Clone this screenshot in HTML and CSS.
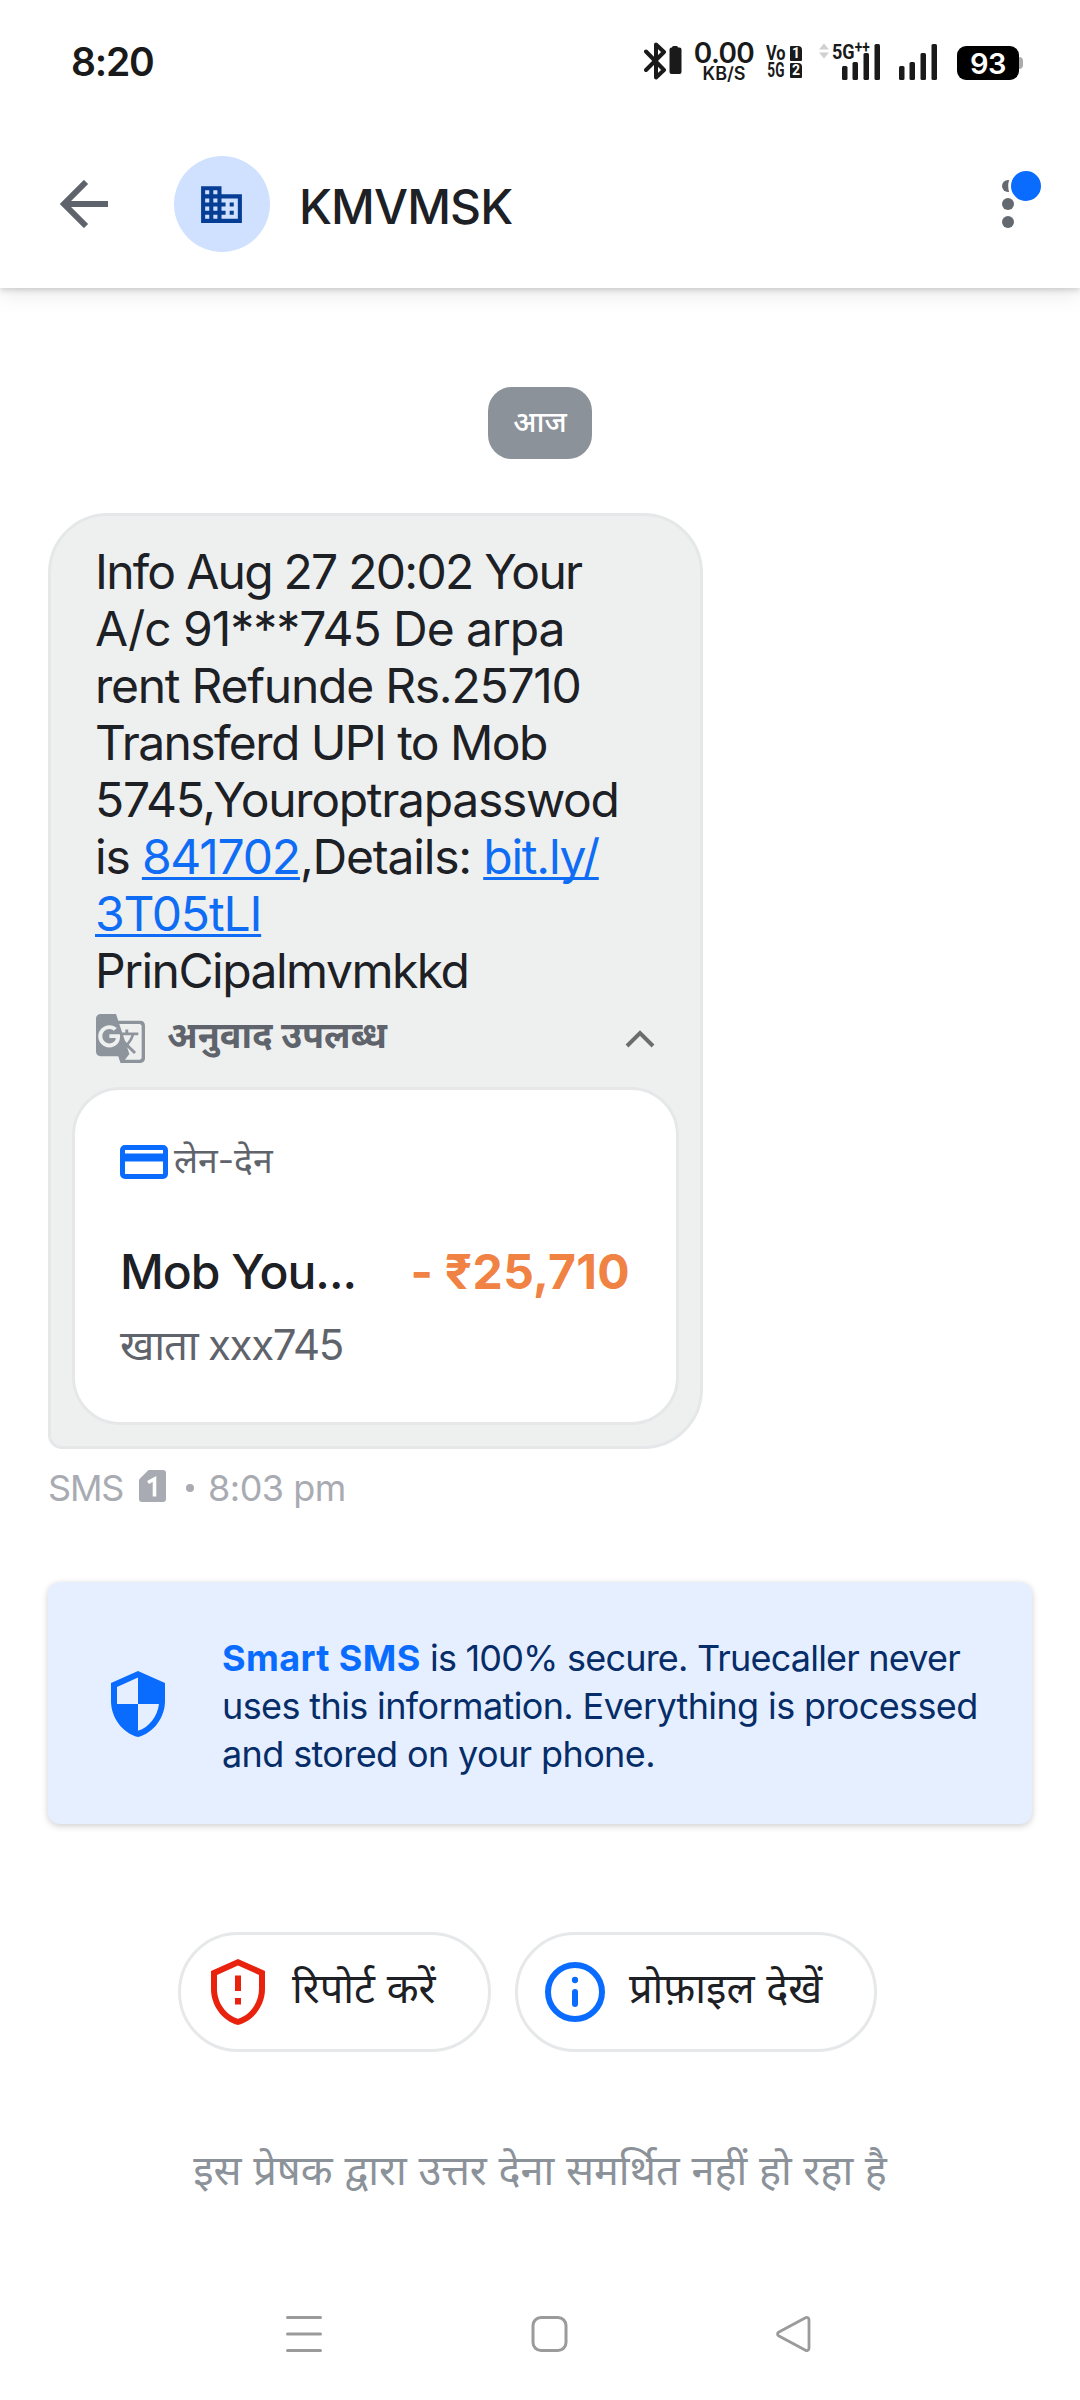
FILE: index.html
```html
<!DOCTYPE html>
<html lang="hi">
<head>
<meta charset="utf-8">
<title>KMVMSK</title>
<link rel="stylesheet" href="styles.css">
</head>
<body>
<div class="screen">
  <div class="status">
    <span class="clock">8:20</span>
    <svg class="status-bt" viewBox="0 0 38 40"><path d="M2 10.500 20 29 12 36.500V3.500L20 11 2 29" fill="none" stroke="#1a1a1a" stroke-width="4" stroke-linejoin="round" stroke-linecap="round"/><path d="M28 6.500a1.500 1.500 0 0 1 1.500-1.500h3a1.500 1.500 0 0 1 1.500 1.500h1.500a2 2 0 0 1 2 2V31a2 2 0 0 1-2 2h-8a2 2 0 0 1-2-2V8.500a2 2 0 0 1 2-2z" fill="#1a1a1a"/></svg>
    <span class="speed"><b>0.00</b><i>KB/S</i></span>
    <span class="volte"><span class="volte-row"><b>Vo</b><em>1</em></span><span class="volte-row"><b class="narrow">5G</b><em>2</em></span></span>
    <span class="sig">
      <svg viewBox="0 0 64 40"><path d="M0 8.500 5 2.500l5 6zM0 11.500h10l-5 6z" fill="#d0d0d0"/><g fill="#1a1a1a"><rect x="23" y="25" width="5.500" height="14" rx="1.500"/><rect x="33.500" y="21" width="5.500" height="18" rx="1.500"/><rect x="44.500" y="12" width="5.500" height="27" rx="1.500"/><rect x="55.500" y="3" width="5.500" height="36" rx="1.500"/></g></svg>
      <b class="net">5G<small>++</small></b>
    </span>
    <svg class="sig2" viewBox="0 0 38 40"><g fill="#1a1a1a"><rect y="25" width="5.500" height="14" rx="1.500"/><rect x="10.500" y="21" width="5.500" height="18" rx="1.500"/><rect x="21.500" y="12" width="5.500" height="27" rx="1.500"/><rect x="32.500" y="3" width="5.500" height="36" rx="1.500"/></g></svg>
    <span class="battery">93</span><span class="nub"></span>
  </div>

  <header class="header">
    <svg class="back" viewBox="0 0 48 48"><path d="M26 2 4 24l22 22M4 24h44" fill="none" stroke="#5f636b" stroke-width="6"/></svg>
    <span class="avatar"><svg viewBox="0 0 24 24" width="49" height="49"><path fill="#063e96" d="M12 7V3H2v18h20V7H12zM6 19H4v-2h2v2zm0-4H4v-2h2v2zm0-4H4V9h2v2zm0-4H4V5h2v2zm4 12H8v-2h2v2zm0-4H8v-2h2v2zm0-4H8V9h2v2zm0-4H8V5h2v2zm10 12h-8v-2h2v-2h-2v-2h2v-2h-2V9h8v10zm-2-8h-2v2h2v-2zm0 4h-2v2h2v-2z"/></svg></span>
    <h1 class="name">KMVMSK</h1>
    <svg class="more" viewBox="0 0 42 60"><g fill="#646870"><circle cx="8" cy="18" r="6"/><circle cx="8" cy="36" r="6"/><circle cx="8" cy="54" r="6"/></g><circle cx="26" cy="18" r="16.400" fill="#0a6cff" stroke="#fff" stroke-width="2.800"/></svg>
  </header>

  <main class="thread">
    <div class="day">आज</div>
    <section class="bubble">
      <p class="message">
        <span>Info Aug 27 20:02 Your</span>
        <span>A/c 91***745 De arpa</span>
        <span>rent Refunde Rs.25710</span>
        <span>Transferd UPI to Mob</span>
        <span>5745,Youroptrapasswod</span>
        <span>is <a>841702</a>,Details: <a>bit.ly/</a></span>
        <span><a>3T05tLI</a></span>
        <span>PrinCipalmvmkkd</span>
      </p>
      <div class="translate">
        <svg class="gt" viewBox="1 1 22 22"><path fill="#8e949c" d="M21 4H11l-1-3H3c-1.100 0-2 .9-2 2v15c0 1.100.9 2 2 2h8l1 3h9c1.100 0 2-.9 2-2V6c0-1.100-.9-2-2-2zM7 16c-2.760 0-5-2.240-5-5s2.240-5 5-5c1.350 0 2.480.5 3.350 1.300L9.030 8.570c-.38-.36-1.040-.78-2.030-.78-1.740 0-3.150 1.440-3.150 3.210S5.260 14.210 7 14.210c2.010 0 2.840-1.440 2.920-2.410H7v-1.710h4.680c.07.31.12.61.12 1.020C11.800 13.970 9.890 16 7 16zm6.170-5.420h3.700c-.43 1.250-1.110 2.430-2.050 3.470-.31-.35-.6-.72-.86-1.100l-.79-2.370zm8.330 9.920c0 .55-.45 1-1 1H14l2-2.500-1.040-3.100 3.100 3.100.92-.92-3.300-3.250.02-.02c1.130-1.250 1.930-2.690 2.400-4.220H20v-1.300h-4.530V8h-1.290v1.290h-1.440L11.460 5.500h9.040c.55 0 1 .45 1 1v14z"/></svg>
        <span class="translate-text">अनुवाद उपलब्ध</span>
        <svg class="chev" viewBox="0 0 30 18"><path d="M2 16 15 3l13 13" fill="none" stroke="#6d6d6d" stroke-width="4"/></svg>
      </div>
      <div class="card">
        <div class="kind"><svg class="cc" viewBox="0 0 48 34"><rect x="2.500" y="2.500" width="43" height="29" rx="2.500" fill="#fff" stroke="#0a6cff" stroke-width="5"/><path fill="#0a6cff" d="M3 8.500h42v8H3z"/></svg><span class="kind-text">लेन-देन</span></div>
        <div class="payment"><span class="payee">Mob You...</span><span class="amount">- ₹25,710</span></div>
        <div class="account">खाता xxx745</div>
      </div>
    </section>
    <div class="meta"><span class="channel">SMS</span><svg class="sim" viewBox="0 0 27 32"><path fill="#a9abb2" d="M9.500 0H24a3 3 0 0 1 3 3v26a3 3 0 0 1-3 3H3a3 3 0 0 1-3-3V9.500z"/><path fill="none" stroke="#fff" stroke-width="3.600" d="M9 12.500 15.500 9v17.500"/></svg><i class="dot"></i><span class="time">8:03 pm</span></div>

    <section class="banner">
      <svg class="shield" viewBox="0 0 24 24"><path fill="#0a6cff" d="M12 1L3 5v6c0 5.550 3.840 10.740 9 12 5.160-1.260 9-6.450 9-12V5l-9-4zm0 10.990h7c-.53 4.120-3.280 7.790-7 8.940V12H5V6.300l7-3.110v8.800z"/></svg>
      <p class="banner-text">
        <span><b>Smart SMS</b> is 100% secure. Truecaller never</span>
        <span>uses this information. Everything is processed</span>
        <span>and stored on your phone.</span>
      </p>
    </section>

    <div class="actions">
      <button class="action"><svg class="ico" viewBox="0 0 24 24"><path fill="#e8220c" d="M12 1L3 5v6c0 5.550 3.840 10.740 9 12 5.160-1.260 9-6.450 9-12V5l-9-4zm7 10c0 4.520-2.980 8.690-7 9.930-4.020-1.240-7-5.410-7-9.930V6.300l7-3.110 7 3.110V11zM11 6.500h2v5.200h-2zM11 14h2v2.200h-2z"/></svg><span>रिपोर्ट करें</span></button>
      <button class="action"><svg class="ico" viewBox="0 0 24 24"><g fill="none" stroke="#0a6cff" stroke-width="2"><circle cx="12" cy="12" r="9"/><path d="M12 12v4" stroke-linecap="round"/></g><circle cx="12" cy="8" r="1.050" fill="#0a6cff"/></svg><span>प्रोफ़ाइल देखें</span></button>
    </div>
    <p class="note">इस प्रेषक द्वारा उत्तर देना समर्थित नहीं हो रहा है</p>
  </main>

  <nav class="nav">
    <svg viewBox="0 0 38 38"><path d="M2.500 2.500h33M2.500 19h33M2.500 35.500h33" fill="none" stroke="#9b9b9b" stroke-width="3" stroke-linecap="round"/></svg>
    <svg viewBox="0 0 38 38"><rect x="3" y="2.500" width="33" height="33" rx="8" fill="none" stroke="#9b9b9b" stroke-width="3"/></svg>
    <svg viewBox="0 0 38 38"><path d="M3.500 17.300 30.500 2.700a2.300 2.300 0 0 1 3.500 2v28.600a2.300 2.300 0 0 1-3.500 2L3.500 20.700a2 2 0 0 1 0-3.400z" fill="none" stroke="#9b9b9b" stroke-width="2.800"/></svg>
  </nav>
</div>
</body>
</html>
```
FILE: styles.css
```css
* { box-sizing: border-box; }
body { margin: 0; background: #fff; }
.screen {
  width: 1080px; height: 2400px; display: flex; flex-direction: column;
  font-family: Inter, "Noto Sans", "Noto Sans Devanagari", sans-serif;
  color: #1d2024; white-space: nowrap; overflow: hidden;
}
svg { display: block; flex: none; }

/* Status bar */
.status { height: 120px; flex: none; display: flex; align-items: flex-start; padding: 41px 56px 0 71px; color: #1a1a1a; }
.clock { width: 572px; font-size: 39px; font-weight: 600; line-height: 41px; letter-spacing: -1.2px; }
.status-bt { width: 38px; height: 40px; margin-left: 1px; }
.speed { width: 64px; margin-left: 10px; display: flex; flex-direction: column; align-items: center; }
.speed b { font-size: 28px; line-height: 24px; font-weight: 600; letter-spacing: -.6px; }
.speed i { font-size: 18px; line-height: 18px; font-weight: 600; font-style: normal; }
.volte { width: 36px; margin-left: 10px; padding-top: 5px; display: flex; flex-direction: column; gap: 2px; }
.volte-row { display: flex; justify-content: space-between; align-items: center; height: 15px; }
.volte b { width: 20px; font: 700 20px/15px Roboto, sans-serif; transform: scaleX(.82); transform-origin: left; }
.volte .narrow { transform: scaleX(.68) translateX(2px); }
.volte em { width: 12px; height: 15px; background: #1a1a1a; border-radius: 1px 4px 1px 1px; color: #fff; font: 700 14px/15px Roboto, sans-serif; text-align: center; }
.sig { position: relative; margin-left: 17px; width: 64px; }
.sig svg { width: 64px; height: 40px; }
.net { position: absolute; left: 13px; top: 2px; font: 700 21px/18px Roboto, sans-serif; transform: scaleX(.86); transform-origin: left; }
.net small { font-size: 16px; vertical-align: 6px; line-height: 1px; }
.sig2 { width: 38px; height: 40px; margin-left: 16px; }
.battery { margin: 5px 0 0 20px; width: 62px; height: 34px; border-radius: 9px; background: #000; color: #fff; font-size: 29px; font-weight: 600; line-height: 35px; text-align: center; letter-spacing: -.4px; }
.nub { width: 4px; height: 12px; margin-top: 16px; background: #aaa; border-radius: 0 4px 4px 0; }

/* Conversation header */
.header { height: 168px; flex: none; display: flex; align-items: center; padding: 0 38px 0 60px; box-shadow: 0 2px 6px rgba(0,0,0,.16), 0 6px 22px rgba(0,0,0,.09); clip-path: inset(0 0 -50px 0); }
.back { width: 48px; height: 48px; }
.avatar { width: 96px; height: 96px; margin-left: 66px; border-radius: 50%; background: #cfe1ff; display: flex; align-items: center; justify-content: center; }
.avatar svg { margin-right: 1px; }
.name { margin: 5px 0 0 29px; flex: 1; font-size: 48px; font-weight: 500; line-height: 60px; letter-spacing: -.9px; }
.more { width: 42px; height: 60px; margin-bottom: 12px; }

/* Message bubble */
.thread { flex: 1; display: flex; flex-direction: column; padding: 99px 48px 0; }
.day { align-self: center; width: 104px; height: 72px; border-radius: 24px; background: #8c9299; color: #fff; font-size: 29.5px; font-weight: 500; line-height: 69px; text-align: center; }
.bubble { width: 655px; height: 936px; margin-top: 54px; padding: 27px 21px 0; border: 3px solid #e5e7e8; border-radius: 60px 60px 60px 14px; background: #eef0f0; }
.message { height: 456px; margin: 0 25px 0 23px; font-size: 48px; font-weight: 380; line-height: 57px; letter-spacing: -1.3px; }
.message span { display: block; }
.message span:nth-child(1) { letter-spacing: -1.75px; }
.message span:nth-child(2) { letter-spacing: -1.05px; }
.message span:nth-child(3) { letter-spacing: -1.25px; }
.message span:nth-child(4) { letter-spacing: -1.58px; }
.message span:nth-child(6) { letter-spacing: -1.2px; }
.message span:nth-child(7) { letter-spacing: -1.15px; }
.message span:nth-child(8) { letter-spacing: -1.5px; }
.message a { color: #0f6cf5; text-decoration: underline; text-decoration-thickness: 3px; text-underline-offset: 3px; text-decoration-skip-ink: none; }
.translate { height: 49px; margin: 15px 24px 0; display: flex; align-items: center; }
.gt { width: 49px; height: 49px; }
.translate-text { flex: 1; height: 49px; margin-left: 22px; color: #5f636b; font-size: 36px; font-weight: 700; line-height: 43px; }
.chev { width: 30px; height: 18px; }
.card { width: 607px; height: 338px; margin-top: 24px; padding: 45px 45px 0; border: 3px solid #e5e7e8; border-radius: 48px; background: #fff; }
.kind { height: 54px; display: flex; align-items: center; gap: 6px; color: #5f636b; font-size: 35.5px; }
.kind-text { height: 54px; line-height: 52px; }
.cc { width: 48px; height: 34px; }
.payment { height: 60px; margin-top: 52px; display: flex; justify-content: space-between; font-size: 48px; line-height: 61px; }
.payee { font-weight: 500; letter-spacing: -1px; }
.amount { margin-right: 1px; color: #f08244; font-weight: 700; letter-spacing: .3px; }
.account { height: 60px; margin-top: 16px; color: #5f636b; font-size: 42px; line-height: 56px; letter-spacing: -1.3px; }
.meta { height: 44px; margin-top: 17px; display: flex; align-items: center; color: #a9abb2; font-size: 36px; line-height: 44px; }
.channel { width: 75px; letter-spacing: -1.2px; }
.sim { width: 27px; height: 32px; margin: 0 0 4px 16px; }
.dot { width: 8px; height: 8px; margin: 0 14px 0 20px; border-radius: 50%; background: #a9abb2; }
.time { letter-spacing: -.5px; }

/* Security banner */
.banner { height: 242px; margin-top: 72px; padding-left: 54px; display: flex; align-items: center; border-radius: 12px; background: #e5efff; box-shadow: 0 2px 7px rgba(0,0,0,.2); }
.shield { width: 72px; height: 72px; margin-top: 2px; }
.banner-text { margin: 5px 0 0 48px; color: #062d68; font-size: 36px; font-weight: 380; line-height: 48px; }
.banner-text span { display: block; letter-spacing: -.62px; }
.banner-text span:first-child { letter-spacing: -.8px; }
.banner-text b { color: #0a6cff; letter-spacing: .4px; }

/* Sender actions */
.actions { height: 120px; margin-top: 108px; padding-left: 130px; display: flex; gap: 24px; }
.action { height: 120px; width: 313px; padding: 0 0 0 21px; display: flex; align-items: center; gap: 18px; border: 3px solid #e6e8e9; border-radius: 60px; background: #fff; color: #1d2024; font: 400 41.5px/60px Inter, "Noto Sans", "Noto Sans Devanagari", sans-serif; }
.action span { height: 68px; }
.action + .action { width: 362px; }
.ico { width: 72px; height: 72px; }
.note { margin: 86px 0 0; text-align: center; color: #8c9299; font-size: 41.5px; line-height: 64px; }

.nav { height: 96px; flex: none; padding: 11px 267px 0 285px; display: flex; justify-content: space-between; }
.nav svg { width: 38px; height: 38px; }
```
